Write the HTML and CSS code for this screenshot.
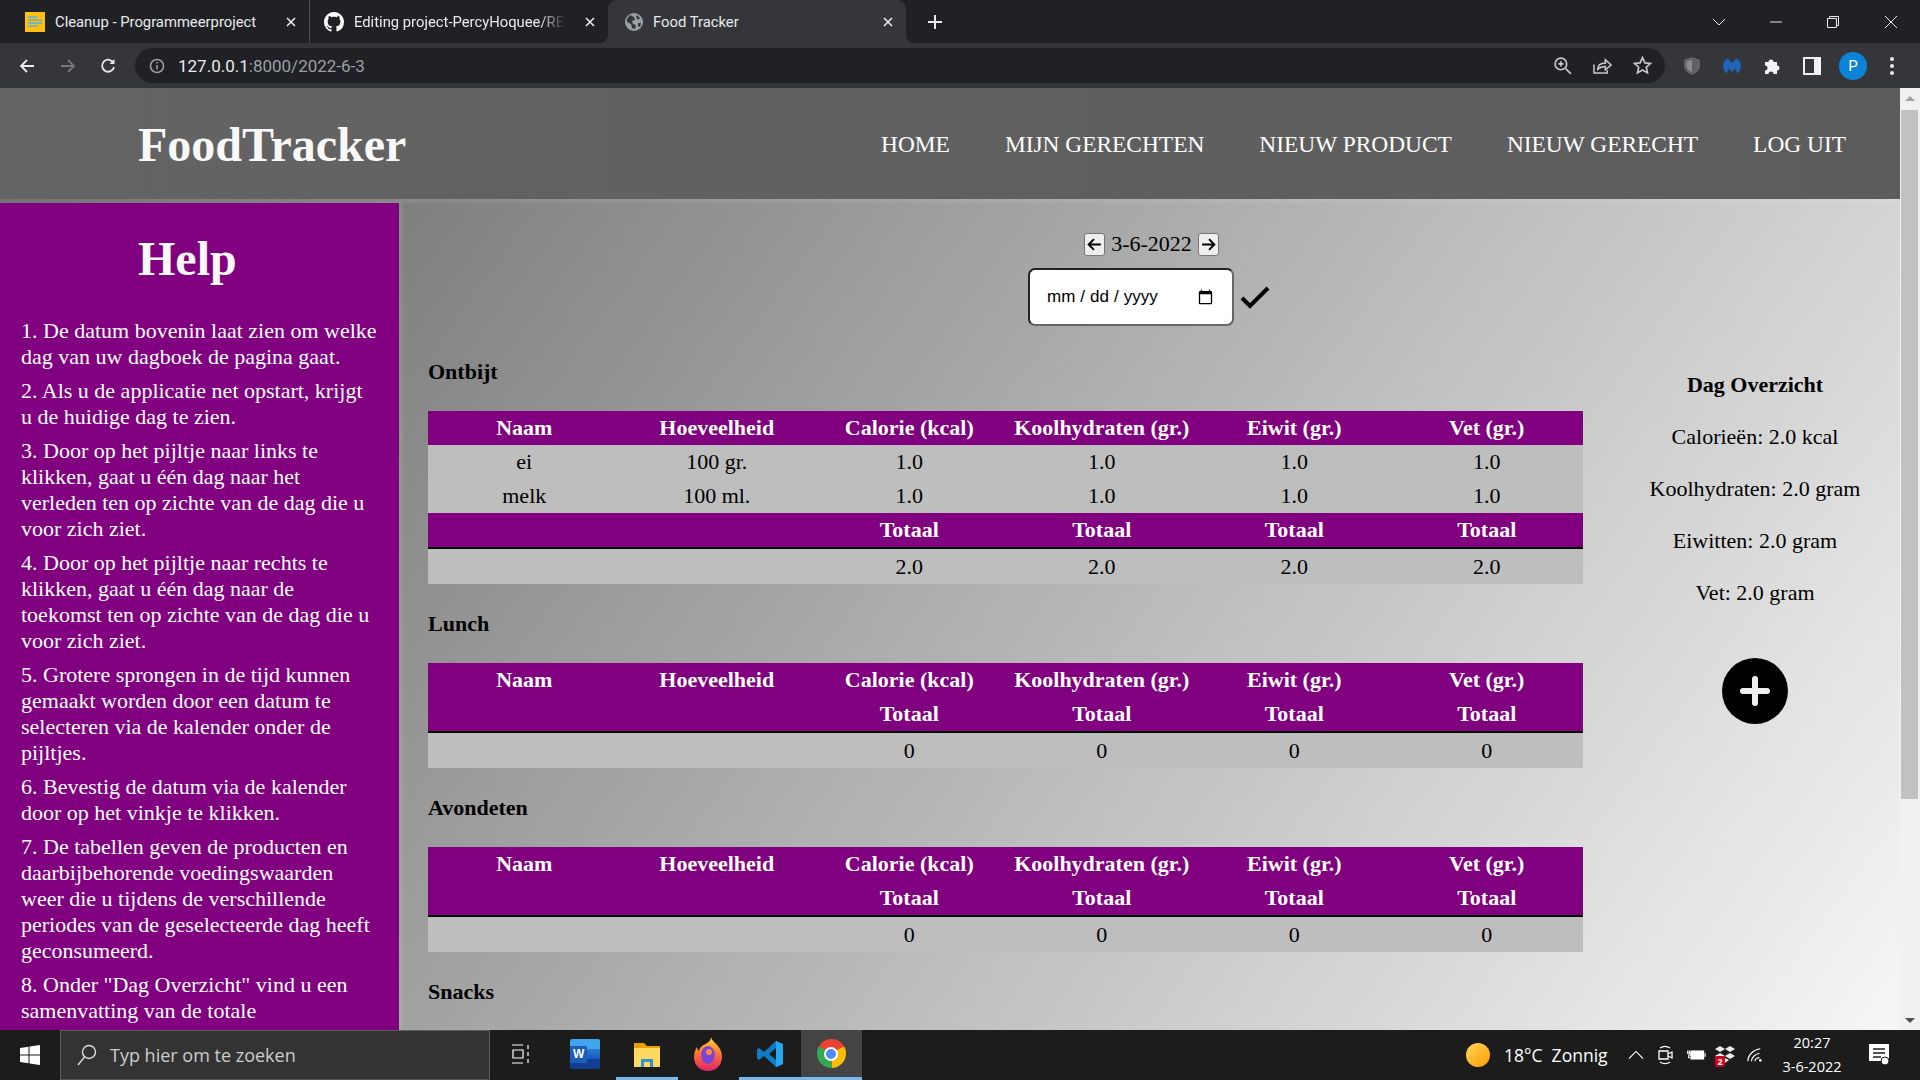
FILE: index.html
```html
<!DOCTYPE html>
<html lang="nl">
<head>
    <meta charset="UTF-8">
    <meta name="viewport" content="width=device-width, initial-scale=1.0">
    <title>Food Tracker</title>
    <link rel="stylesheet" href="styles.css">
</head>
<body>
    <!-- browser: tabs -->
    <div class="tabstrip">
        <div class="tab tab-first">
            <svg class="favicon" viewBox="0 0 20 20"><rect width="20" height="20" fill="#fdc010"/><path d="M3 5h9M3 8h14M3 11h14M3 14h10" stroke="#7fb6a8" stroke-width="2"/></svg>
            <span class="tab-title">Cleanup - Programmeerproject</span>
            <svg class="tab-close" viewBox="0 0 10 10"><path d="M1 1l8 8M9 1l-8 8"/></svg>
        </div>
        <div class="tab tab-second">
            <svg class="favicon" viewBox="0 0 16 16"><path fill="#fff" d="M8 0C3.58 0 0 3.58 0 8c0 3.54 2.29 6.53 5.47 7.59.4.07.55-.17.55-.38 0-.19-.01-.82-.01-1.49-2.01.37-2.53-.49-2.69-.94-.09-.23-.48-.94-.82-1.13-.28-.15-.68-.52-.01-.53.63-.01 1.08.58 1.23.82.72 1.21 1.87.87 2.33.66.07-.52.28-.87.51-1.07-1.78-.2-3.64-.89-3.64-3.95 0-.87.31-1.59.82-2.15-.08-.2-.36-1.02.08-2.12 0 0 .67-.21 2.2.82.64-.18 1.32-.27 2-.27.68 0 1.36.09 2 .27 1.53-1.04 2.2-.82 2.2-.82.44 1.1.16 1.92.08 2.12.51.56.82 1.27.82 2.15 0 3.07-1.87 3.75-3.65 3.95.29.25.54.73.54 1.48 0 1.07-.01 1.93-.01 2.2 0 .21.15.46.55.38A8.013 8.013 0 0016 8c0-4.42-3.58-8-8-8z"/></svg>
            <span class="tab-title tab-fade">Editing project-PercyHoquee/README</span>
            <svg class="tab-close" viewBox="0 0 10 10"><path d="M1 1l8 8M9 1l-8 8"/></svg>
        </div>
        <div class="tab tab-active">
            <svg class="favicon favicon-small" viewBox="0 0 18 18"><circle cx="9" cy="9" r="9" fill="#9aa0a6"/><path fill="#35363a" d="M5 2l4 2 1 3-3 1 1 3 3 1-1 4-3-1-1-4-4-2 0-3zM12 2l3 3-2 2-2-3zM16 10l-1 4-2-1 0-3z"/></svg>
            <span class="tab-title">Food Tracker</span>
            <svg class="tab-close" viewBox="0 0 10 10"><path d="M1 1l8 8M9 1l-8 8"/></svg>
        </div>
        <svg class="new-tab" viewBox="0 0 14 14"><path d="M7 0v14M0 7h14"/></svg>
        <div class="window-controls">
            <svg viewBox="0 0 14 8" class="wc-chevron"><path d="M1 1l6 6 6-6"/></svg>
            <svg viewBox="0 0 14 14" class="wc-min"><path d="M1 7h12"/></svg>
            <svg viewBox="0 0 14 14" class="wc-restore"><path d="M1.5 3.5h9v9h-9zM3.5 3.5v-2h9v9h-2"/></svg>
            <svg viewBox="0 0 14 14" class="wc-close"><path d="M1 1l12 12M13 1L1 13"/></svg>
        </div>
    </div>

    <!-- browser: toolbar -->
    <div class="toolbar">
        <svg class="tool tool-back" viewBox="0 0 16 16"><path d="M15 8H2M8 2L2 8l6 6"/></svg>
        <svg class="tool tool-forward" viewBox="0 0 16 16"><path d="M1 8h13M8 2l6 6-6 6"/></svg>
        <svg class="tool tool-reload" viewBox="0 0 16 16"><path d="M13.5 5A6 6 0 1 0 14 9"/><path class="solid" d="M14.5 1v5h-5z"/></svg>
        <div class="omnibox">
            <svg class="info-icon" viewBox="0 0 16 16"><circle cx="8" cy="8" r="6.5"/><path d="M8 7v4.5M8 4v1.5"/></svg>
            <span class="url">127.0.0.1<span class="url-rest">:8000/2022-6-3</span></span>
            <div class="omni-icons">
                <svg viewBox="0 0 18 18"><circle cx="7.5" cy="7.5" r="5.5"/><path d="M12 12l5 5M5 7.5h5M7.5 5v5"/></svg>
                <svg viewBox="0 0 20 18"><path d="M1 8v9h14v-3"/><path d="M5 13c0-4 3-6.500 8-6.500V3l6 5.500-6 5V10c-3 0-6 1-8 3z"/></svg>
                <svg viewBox="0 0 18 18"><path d="M9 1.500l2.300 5 5.200.600-3.900 3.500 1.100 5.400L9 13.300 4.300 16l1.100-5.400-3.900-3.500 5.200-.6z"/></svg>
            </div>
        </div>
        <div class="extensions">
            <svg viewBox="0 0 18 20"><path fill="#5f6063" stroke="#77787b" d="M9 1l8 2.500V10c0 4.500-3.500 7.500-8 9-4.500-1.500-8-4.500-8-9V3.500z"/><path fill="#8a8b8e" d="M3 5l6-2v14c-3-1.500-6-3.500-6-7z"/></svg>
            <svg viewBox="0 0 18 18"><path fill="#1f64b8" d="M4.500 1C1.500 3 0 6 0 9c0 3 1.500 5.500 3.500 7.500L6 11.500 9 15l3-3.500 2.500 5C16.500 14.500 18 12 18 9c0-3-1.500-6-4.500-8L9 6z"/></svg>
            <svg viewBox="0 0 18 18"><path fill="#f1f3f4" d="M2 5h3.500a2.500 2.500 0 1 1 5 0H14v3.500a2.500 2.500 0 1 1 0 5V17h-3.500a2.500 2.500 0 1 0-5 0H2v-3.500a2.500 2.500 0 1 0 0-5z"/></svg>
            <svg viewBox="0 0 18 18"><path fill="#f1f3f4" d="M0 0h18v18H0z"/><path fill="#35363a" d="M2 2h9v14H2z"/></svg>
            <div class="avatar">P</div>
            <div class="kebab"><i></i><i></i><i></i></div>
        </div>
    </div>

    <div class="viewport">
        <div class="page">
            <nav class="topnav">
                <a class="brand">FoodTracker</a>
                <div class="nav-links">
                    <a>Home</a>
                    <a>Mijn gerechten</a>
                    <a>Nieuw product</a>
                    <a>Nieuw gerecht</a>
                    <a>Log uit</a>
                </div>
            </nav>
            <div class="content">
                <aside class="help">
                    <h1>Help</h1>
                    <p>1. De datum bovenin laat zien om welke dag van uw dagboek de pagina gaat.</p>
                    <p>2. Als u de applicatie net opstart, krijgt u de huidige dag te zien.</p>
                    <p>3. Door op het pijltje naar links te klikken, gaat u één dag naar het verleden ten op zichte van de dag die u voor zich ziet.</p>
                    <p>4. Door op het pijltje naar rechts te klikken, gaat u één dag naar de toekomst ten op zichte van de dag die u voor zich ziet.</p>
                    <p>5. Grotere sprongen in de tijd kunnen gemaakt worden door een datum te selecteren via de kalender onder de pijltjes.</p>
                    <p>6. Bevestig de datum via de kalender door op het vinkje te klikken.</p>
                    <p>7. De tabellen geven de producten en daarbijbehorende voedingswaarden weer die u tijdens de verschillende periodes van de geselecteerde dag heeft geconsumeerd.</p>
                    <p>8. Onder "Dag Overzicht" vind u een samenvatting van de totale voedingswaarden van die dag.</p>
                </aside>
                <main class="diary">
                    <div class="date-nav">
                        <button class="arrow-btn"><svg viewBox="0 0 16 16"><path d="M14 8H2.500M7.500 3L2.500 8l5 5"/></svg></button>
                        <span>3-6-2022</span>
                        <button class="arrow-btn"><svg viewBox="0 0 16 16"><path d="M2 8h11.500M8.500 3l5 5-5 5"/></svg></button>
                    </div>
                    <form class="date-form">
                        <input type="date" class="date-input">
                        <svg class="check" viewBox="0 0 30 24"><path d="M2 13l8 8L28 3"/></svg>
                    </form>
                    <div class="overview">
                        <div class="tables">
                            <h4>Ontbijt</h4>
                            <table>
                                <tr><th>Naam</th><th>Hoeveelheid</th><th>Calorie (kcal)</th><th>Koolhydraten (gr.)</th><th>Eiwit (gr.)</th><th>Vet (gr.)</th></tr>
                                <tr><td>ei</td><td>100 gr.</td><td>1.0</td><td>1.0</td><td>1.0</td><td>1.0</td></tr>
                                <tr><td>melk</td><td>100 ml.</td><td>1.0</td><td>1.0</td><td>1.0</td><td>1.0</td></tr>
                                <tr class="total-head"><th></th><th></th><th>Totaal</th><th>Totaal</th><th>Totaal</th><th>Totaal</th></tr>
                                <tr class="total-row"><td></td><td></td><td>2.0</td><td>2.0</td><td>2.0</td><td>2.0</td></tr>
                            </table>
                            <h4>Lunch</h4>
                            <table>
                                <tr><th>Naam</th><th>Hoeveelheid</th><th>Calorie (kcal)</th><th>Koolhydraten (gr.)</th><th>Eiwit (gr.)</th><th>Vet (gr.)</th></tr>
                                <tr class="total-head"><th></th><th></th><th>Totaal</th><th>Totaal</th><th>Totaal</th><th>Totaal</th></tr>
                                <tr class="total-row"><td></td><td></td><td>0</td><td>0</td><td>0</td><td>0</td></tr>
                            </table>
                            <h4>Avondeten</h4>
                            <table>
                                <tr><th>Naam</th><th>Hoeveelheid</th><th>Calorie (kcal)</th><th>Koolhydraten (gr.)</th><th>Eiwit (gr.)</th><th>Vet (gr.)</th></tr>
                                <tr class="total-head"><th></th><th></th><th>Totaal</th><th>Totaal</th><th>Totaal</th><th>Totaal</th></tr>
                                <tr class="total-row"><td></td><td></td><td>0</td><td>0</td><td>0</td><td>0</td></tr>
                            </table>
                            <h4>Snacks</h4>
                        </div>
                        <div class="day-summary">
                            <h4>Dag Overzicht</h4>
                            <p>Calorieën: 2.0 kcal</p>
                            <p>Koolhydraten: 2.0 gram</p>
                            <p>Eiwitten: 2.0 gram</p>
                            <p>Vet: 2.0 gram</p>
                            <a class="add-btn"><svg viewBox="0 0 66 66"><circle cx="33" cy="33" r="33"/><path d="M33 21v24M21 33h24"/></svg></a>
                        </div>
                    </div>
                </main>
            </div>
        </div>
        <div class="scrollbar">
            <div class="sb-up"></div>
            <div class="sb-track"><div class="sb-thumb"></div></div>
            <div class="sb-down"></div>
        </div>
    </div>

    <!-- windows taskbar -->
    <div class="taskbar">
        <div class="start">
            <svg viewBox="0 0 20 20"><path fill="#fff" d="M0 3l8.500-1.200V9.500H0zM9.500 1.600L20 0v9.500H9.500zM0 10.500h8.500v7.700L0 17zM9.500 10.500H20V20L9.500 18.400z"/></svg>
        </div>
        <div class="searchbox">
            <svg viewBox="0 0 20 22"><circle cx="12" cy="8" r="6.500"/><path d="M7.500 13L1 21"/></svg>
            <span>Typ hier om te zoeken</span>
        </div>
        <div class="task-icons">
            <div class="task-item">
                <svg class="task-view" viewBox="0 0 20 20"><path d="M1 1h11M1 19h11M2 6h10v8H2zM17 1v4M17 8v4M17 15v4"/></svg>
            </div>
            <div class="task-item">
                <div class="word-icon"><b>W</b></div>
            </div>
            <div class="task-item running">
                <svg viewBox="0 0 28 28" class="task-svg"><path fill="#e8a200" d="M1 3h10l3 3h13v19H1z"/><path fill="#ffd862" d="M1 8h26v19H1z"/><path fill="#2f93d8" d="M8 19h12v8h-3v-5h-6v5H8z"/></svg>
            </div>
            <div class="task-item">
                <svg viewBox="0 0 28 34" class="task-fox"><defs><linearGradient id="fox" x1="0" y1="0" x2="0" y2="1"><stop offset="0" stop-color="#ffd53d"/><stop offset=".45" stop-color="#ff7a2b"/><stop offset="1" stop-color="#e3226c"/></linearGradient></defs><path fill="url(#fox)" d="M17 0c1 4 4 5 7 9 3 4 4 7 4 11 0 8-6 14-14 14S0 28 0 20c0-4 1-7 3-10 0 2 1 3 2 4 1-5 5-6 8-8 2-1 4-3 4-6z"/><ellipse cx="14" cy="18" rx="7" ry="9" fill="#7d42d6"/><ellipse cx="15" cy="15" rx="3" ry="3" fill="#ff8a3c"/></svg>
            </div>
            <div class="task-item running">
                <svg viewBox="0 0 28 28" class="task-svg"><path fill="#0f7cc4" d="M20 1l7 3v20l-7 3L8 16l-5 4-2-1.500v-9L3 8l5 4zM20 8l-7 6 7 6z"/><path fill="#25a6ee" d="M20 1l7 3v20l-7 3z"/></svg>
            </div>
            <div class="task-item running active">
                <div class="chrome-icon"><i></i></div>
            </div>
        </div>
        <div class="tray">
            <div class="sun"></div>
            <span class="weather">18°C&nbsp; Zonnig</span>
            <svg class="tray-icon tray-chevron" viewBox="0 0 18 10"><path d="M1 9l8-8 8 8"/></svg>
            <svg class="tray-icon tray-meet" viewBox="0 0 16 20"><path d="M2 6h9v8H2zM11 9l4-2v6l-4-2M3 3c3-2 7-2 10 0M3 17c3 2 7 2 10 0"/></svg>
            <svg class="tray-icon tray-battery" viewBox="0 0 22 12"><path class="solid" d="M5 1h15v10H5z"/><path d="M2 1v3M4 1v3M1 4h4v2H3v3h2M21 4v4"/></svg>
            <div class="dropbox">
                <svg viewBox="0 0 20 18"><path fill="#eee" d="M5 0l5 3-5 3-5-3zM15 0l5 3-5 3-5-3zM5 7l5 3-5 3-5-3zM15 7l5 3-5 3-5-3zM10 12l4 2-4 3z"/></svg>
                <span class="drop-badge">2</span>
            </div>
            <svg class="tray-icon tray-wifi" viewBox="0 0 18 16"><path d="M1 15C1 8 7 2 15 1M5 15c0-4 4-8 9-9M9 15c0-2 2-4 5-4"/><circle class="solid" cx="15" cy="14" r="1.500"/></svg>
            <div class="clock"><span>20:27</span><span>3-6-2022</span></div>
            <svg class="notif" viewBox="0 0 22 22"><path fill="#fff" d="M0 0h20v17H0z"/><path d="M4 5h12M4 9h12M4 13h8" stroke="#1c1c1c" stroke-width="1.500"/><circle cx="16" cy="17" r="4" fill="#fff" stroke="#1c1c1c"/></svg>
        </div>
    </div>
</body>
</html>
```

FILE: styles.css
```css
* {
    box-sizing: border-box;
}
html, body {
    height: 100%;
}
body {
    margin: 0;
    display: flex;
    flex-direction: column;
    overflow: hidden;
    font-family: "Liberation Serif", serif;
    font-size: 22px;
    color: #000;
}

/* browser chrome */
.tabstrip {
    height: 43px;
    flex: none;
    display: flex;
    align-items: center;
    background-color: #202124;
    font-family: Roboto, sans-serif;
    font-size: 14.8px;
    color: #e8eaed;
}
.tab {
    position: relative;
    height: 43px;
    display: flex;
    align-items: center;
}
.tab-first {
    width: 309px;
    padding-left: 25px;
}
.tab-second {
    width: 299px;
    padding-left: 14px;
    border-left: 1px solid #4a4b4f;
    background-clip: padding-box;
}
.tab-active {
    width: 298px;
    padding-left: 17px;
    background-color: #35363a;
    border-radius: 9px 9px 0 0;
}
.tab-active::before, .tab-active::after {
    content: "";
    position: absolute;
    bottom: 0;
    width: 9px;
    height: 9px;
}
.tab-active::before {
    left: -9px;
    background: radial-gradient(circle at 0 0, transparent 9px, #35363a 9.5px);
}
.tab-active::after {
    right: -9px;
    background: radial-gradient(circle at 100% 0, transparent 9px, #35363a 9.5px);
}
.favicon {
    width: 20px;
    height: 20px;
    flex: none;
    margin-right: 10px;
}
.favicon-small {
    width: 18px;
    height: 18px;
}
.tab-title {
    flex: 1;
    white-space: nowrap;
    overflow: hidden;
}
.tab-fade {
    -webkit-mask-image: linear-gradient(to right, #000 88%, transparent);
    mask-image: linear-gradient(to right, #000 88%, transparent);
}
.tab-close {
    width: 10px;
    height: 10px;
    flex: none;
    margin: 0 13px 0 20px;
    stroke: #e8eaed;
    stroke-width: 1.6;
    fill: none;
}
.new-tab {
    width: 14px;
    height: 14px;
    margin-left: 22px;
    stroke: #e8eaed;
    stroke-width: 2;
}
.window-controls {
    margin-left: auto;
    display: flex;
    align-items: center;
}
.window-controls svg {
    width: 14px;
    height: 14px;
    fill: none;
    stroke: #e8eaed;
    stroke-width: 1;
}
.wc-chevron {
    margin-right: 43px;
}
.wc-min {
    margin-right: 43px;
}
.wc-restore {
    margin-right: 44px;
}
.wc-close {
    margin-right: 22px;
}
.toolbar {
    height: 45px;
    flex: none;
    display: flex;
    align-items: center;
    background-color: #35363a;
}
.tool {
    width: 16px;
    height: 16px;
    flex: none;
    fill: none;
    stroke: #e8eaed;
    stroke-width: 1.8;
}
.tool .solid {
    fill: #e8eaed;
    stroke: none;
}
.tool-back {
    margin-left: 19px;
}
.tool-forward {
    margin-left: 25px;
    stroke: #77787b;
}
.tool-reload {
    margin-left: 24px;
}
.omnibox {
    width: 1530px;
    height: 35px;
    flex: none;
    margin-left: 19px;
    display: flex;
    align-items: center;
    padding-left: 14px;
    border-radius: 18px;
    background-color: #202124;
}
.info-icon {
    width: 16px;
    height: 16px;
    flex: none;
    fill: none;
    stroke: #9aa0a6;
    stroke-width: 1.6;
}
.url {
    margin-left: 13px;
    font-family: Roboto, sans-serif;
    font-size: 17px;
    color: #e8eaed;
}
.url-rest {
    color: #9aa0a6;
}
.omni-icons {
    margin-left: auto;
    margin-right: 13px;
    display: flex;
    gap: 21px;
}
.omni-icons svg {
    width: 19px;
    height: 19px;
    fill: none;
    stroke: #c4c7ca;
    stroke-width: 1.6;
}
.extensions {
    display: flex;
    align-items: center;
    margin-left: 18px;
}
.extensions > svg {
    width: 18px;
    height: 18px;
    margin-right: 22px;
}
.avatar {
    width: 28px;
    height: 28px;
    margin-left: -4px;
    border-radius: 50%;
    background-color: #0b84d8;
    color: #fff;
    font-family: Roboto, sans-serif;
    font-size: 15px;
    line-height: 28px;
    text-align: center;
}
.kebab {
    margin-left: 23px;
    display: flex;
    flex-direction: column;
    gap: 3px;
}
.kebab i {
    width: 4px;
    height: 4px;
    border-radius: 50%;
    background-color: #e8eaed;
}

/* the page itself */
.viewport {
    flex: 1;
    min-height: 0;
    display: flex;
}
.page {
    flex: 1;
    min-width: 0;
    display: flex;
    flex-direction: column;
    overflow: hidden;
    background: linear-gradient(126deg, #646464, #f6f6f6);
}
.topnav {
    height: 115px;
    flex: none;
    display: flex;
    align-items: center;
    justify-content: space-between;
    padding: 2px 54px 0 138px;
    border-bottom: 4px solid rgba(255, 255, 255, 0.08);
    background: linear-gradient(to right, #646464, #5c5c5c) padding-box;
}
.brand {
    font-size: 48px;
    font-weight: bold;
    color: #f8f8f8;
}
.nav-links {
    display: flex;
    gap: 55px;
}
.nav-links a {
    font-size: 23.4px;
    color: #fff;
    text-transform: uppercase;
}
.content {
    flex: 1;
    min-height: 0;
    display: flex;
}
.help {
    width: 403px;
    flex: none;
    overflow: hidden;
    padding: 28px 20px 0 21px;
    border-right: 4px solid rgba(255, 255, 255, 0.08);
    background: #800080 padding-box;
    color: #fff;
}
.help h1 {
    margin: 0 0 32px 117px;
    font-size: 48px;
    color: #f8f8f8;
}
.help p {
    margin: 0 0 8px;
    line-height: 26px;
}
.diary {
    flex: 1;
    min-width: 0;
    padding-top: 28px;
}
.date-nav {
    height: 26px;
    display: flex;
    align-items: center;
    justify-content: center;
    gap: 6px;
}
.arrow-btn {
    width: 21px;
    height: 23px;
    padding: 0;
    display: flex;
    align-items: center;
    justify-content: center;
    background-color: #efefef;
    border: 1px solid #767676;
    border-radius: 3px;
}
.arrow-btn svg {
    width: 17px;
    height: 17px;
    fill: none;
    stroke: #000;
    stroke-width: 1.8;
}
.date-form {
    margin-top: 11px;
    display: flex;
    align-items: center;
    justify-content: center;
    gap: 6px;
    padding-right: 5px;
}
.date-input {
    width: 206px;
    height: 58px;
    padding: 0 16px;
    border: 2px solid;
    border-color: #222 #666 #666 #222;
    border-radius: 7px;
    background-color: #fff;
    font-family: "Liberation Sans", sans-serif;
    font-size: 17px;
}
.date-input::-webkit-datetime-edit-text {
    padding: 0 4px;
}
.check {
    width: 30px;
    height: 24px;
    fill: none;
    stroke: #000;
    stroke-width: 4;
}
.overview {
    display: flex;
    margin-left: 25px;
}
.tables {
    width: 1155px;
    flex: none;
}
.tables h4 {
    margin: 27px 0 26px;
    font-size: 22px;
    line-height: 26px;
}
.tables h4:first-child {
    margin: 33px 0 26px;
}
table {
    width: 100%;
    table-layout: fixed;
    border-spacing: 0;
}
th, td {
    height: 34px;
    padding: 4px;
    line-height: 26px;
    text-align: center;
}
th {
    background-color: #800080;
    color: #fff;
}
td {
    background-color: #bebebe;
}
.total-head th {
    height: 36px;
    border-bottom: 2px solid #000;
}
.total-row td {
    height: 35px;
    padding-top: 5px;
}
.day-summary {
    width: 290px;
    margin-left: 27px;
    padding-top: 46px;
    text-align: center;
}
.day-summary h4 {
    margin: 0 0 26px;
    font-size: 22px;
    line-height: 26px;
}
.day-summary p {
    margin: 0 0 26px;
    line-height: 26px;
}
.add-btn {
    display: block;
    width: 66px;
    height: 66px;
    margin: 52px auto 0;
}
.add-btn svg {
    display: block;
}
.add-btn path {
    stroke: #efefef;
    stroke-width: 6;
    stroke-linecap: round;
}

/* scrollbar */
.scrollbar {
    width: 20px;
    flex: none;
    display: flex;
    flex-direction: column;
    background-color: #f1f1f1;
}
.sb-up, .sb-down {
    height: 20px;
    flex: none;
    display: flex;
    align-items: center;
    justify-content: center;
}
.sb-up::before {
    content: "";
    border: 5px solid transparent;
    border-top: 0;
    border-bottom: 5px solid #a3a3a3;
}
.sb-down::before {
    content: "";
    border: 5px solid transparent;
    border-bottom: 0;
    border-top: 5px solid #505050;
}
.sb-track {
    flex: 1;
    padding: 2px 2px 0 1px;
}
.sb-thumb {
    height: 689px;
    background-color: #c1c1c1;
}

/* taskbar */
.taskbar {
    height: 50px;
    flex: none;
    display: flex;
    align-items: center;
    background-color: #1c1c1c;
    color: #fff;
    font-family: "Open Sans", sans-serif;
}
.start {
    width: 60px;
    display: flex;
    justify-content: center;
}
.start svg {
    width: 20px;
    height: 20px;
}
.searchbox {
    width: 430px;
    height: 50px;
    display: flex;
    align-items: center;
    padding-left: 16px;
    background-color: #333;
    border: 1px solid #5c5c5c;
    border-bottom-color: #555;
    color: #ccc;
    font-size: 18px;
}
.searchbox svg {
    width: 20px;
    height: 22px;
    margin-right: 13px;
    fill: none;
    stroke: #ddd;
    stroke-width: 1.4;
}
.task-icons {
    display: flex;
    margin-left: 3px;
}
.task-item {
    width: 61.5px;
    height: 50px;
    display: flex;
    align-items: center;
    justify-content: center;
    border-bottom: 3px solid transparent;
}
.task-item.running {
    border-bottom-color: #76b9ed;
    background-clip: padding-box;
}
.task-item.active {
    background-color: #444;
}
.task-view {
    width: 20px;
    height: 20px;
    margin-right: 6px;
    fill: none;
    stroke: #fff;
    stroke-width: 1.2;
}
.task-svg {
    width: 28px;
    height: 30px;
}
.task-fox {
    width: 28px;
    height: 34px;
}
.word-icon {
    position: relative;
    width: 30px;
    height: 30px;
    border-radius: 2px;
    background: linear-gradient(#41a5ee 33%, #2b7cd3 33%, #185abd 66%, #103f91 66%);
}
.word-icon b {
    position: absolute;
    left: 0;
    top: 7px;
    width: 17px;
    height: 17px;
    background-color: #1d5cb8;
    font-family: "Liberation Sans", sans-serif;
    font-size: 12px;
    line-height: 17px;
    text-align: center;
}
.chrome-icon {
    width: 29px;
    height: 29px;
    display: flex;
    align-items: center;
    justify-content: center;
    border-radius: 50%;
    background: conic-gradient(from -60deg, #ea4335 0 120deg, #fbbc05 120deg 240deg, #34a853 240deg);
}
.chrome-icon i {
    width: 14px;
    height: 14px;
    border-radius: 50%;
    background-color: #4a8bf5;
    border: 2px solid #fff;
}
.tray {
    margin-left: auto;
    display: flex;
    align-items: center;
}
.sun {
    width: 24px;
    height: 24px;
    border-radius: 50%;
    background: linear-gradient(135deg, #ffd75a, #ff9c00);
}
.weather {
    margin-left: 14px;
    font-size: 17.5px;
    width: 107px;
    white-space: nowrap;
}
.tray-icon {
    width: 16px;
    height: 20px;
    fill: none;
    stroke: #fff;
    stroke-width: 1.3;
}
.tray-icon .solid {
    fill: #fff;
    stroke: none;
}
.tray-chevron {
    margin-left: 17px;
    height: 10px;
}
.tray-meet {
    margin-left: 13px;
}
.tray-battery {
    width: 20px;
    height: 12px;
    margin-left: 13px;
}
.dropbox {
    position: relative;
    width: 20px;
    height: 18px;
    margin-left: 9px;
}
.dropbox svg {
    display: block;
}
.drop-badge {
    position: absolute;
    left: 0;
    bottom: -3px;
    width: 10px;
    height: 11px;
    border-radius: 2px;
    background-color: #d0021b;
    font-size: 9px;
    font-weight: bold;
    line-height: 11px;
    text-align: center;
}
.tray-wifi {
    width: 16px;
    margin-left: 12px;
}
.clock {
    width: 68px;
    margin-left: 15px;
    display: flex;
    flex-direction: column;
    align-items: center;
    font-size: 14.5px;
    line-height: 24px;
    white-space: nowrap;
}
.notif {
    width: 22px;
    height: 22px;
    margin: 0 29px 0 23px;
}
```
